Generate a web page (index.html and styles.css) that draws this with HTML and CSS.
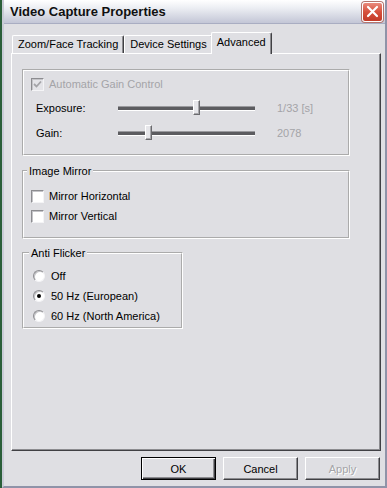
FILE: index.html
```html
<!DOCTYPE html>
<html>
<head>
  <title>Video Capture Properties</title>
  <link rel="stylesheet" href="styles.css">
</head>
<body>

  <div class="window">
    <div class="titlebar">
      <span class="title">Video Capture Properties</span>
      <span class="close">
        <svg width="13" height="13" viewBox="0 0 13 13"><path d="M2 2 L11 11 M11 2 L2 11" stroke="#fff" stroke-width="2.2" stroke-linecap="round"/></svg>
      </span>
    </div>

    <div class="client">
      <div class="tabs">
        <span class="tab">Zoom/Face Tracking</span>
        <span class="tab">Device Settings</span>
        <span class="tab active">Advanced</span>
      </div>

      <div class="panel">
        <div class="group gain">
          <div class="row check-row disabled">
            <span class="check checked"><svg width="9" height="9" viewBox="0 0 9 9"><path d="M1 4 L3.5 6.5 L8 1.5" fill="none" stroke="#a4a4a8" stroke-width="1.8"/></svg></span>
            <span>Automatic Gain Control</span>
          </div>
          <div class="slider-row">
            <span>Exposure:</span>
            <div class="slider"><span class="thumb" style="left: 75px"></span></div>
            <span class="value">1/33 [s]</span>
          </div>
          <div class="slider-row">
            <span>Gain:</span>
            <div class="slider"><span class="thumb" style="left: 27px"></span></div>
            <span class="value">2078</span>
          </div>
        </div>

        <fieldset class="group mirror">
          <legend>Image Mirror</legend>
          <div class="row"><span class="check"></span><span>Mirror Horizontal</span></div>
          <div class="row"><span class="check"></span><span>Mirror Vertical</span></div>
        </fieldset>

        <fieldset class="group flicker">
          <legend>Anti Flicker</legend>
          <div class="row"><span class="radio"></span><span>Off</span></div>
          <div class="row"><span class="radio selected"></span><span>50 Hz (European)</span></div>
          <div class="row"><span class="radio"></span><span>60 Hz (North America)</span></div>
        </fieldset>
      </div>

      <div class="buttons">
        <button type="button" class="btn default">OK</button>
        <button type="button" class="btn">Cancel</button>
        <button type="button" class="btn disabled">Apply</button>
      </div>
    </div>
  </div>

</body>
</html>
```

FILE: styles.css
```css
* {
  box-sizing: border-box;
}

body {
  margin: 0;
  background-color: #2a5e38;
  font: 11px "Liberation Sans", Arial, sans-serif;
  color: #000;
}

.window {
  margin-left: 2px;
  width: 385px;
  height: 488px;
  background-color: #dfdfe3;
  border-left: 2px solid #c9cbd6;
  border-right: 2px solid #8f93a8;
  border-bottom: 2px solid #8f93a8;
}

.titlebar {
  height: 24px;
  display: flex;
  align-items: center;
  justify-content: space-between;
  padding: 0 2px 0 6px;
  background: linear-gradient(to bottom, #ffffff 0%, #eceef3 35%, #c3c6d6 100%);
  border-bottom: 1px solid #a9adc2;
}

.title {
  font-weight: bold;
  font-size: 13px;
  color: #101010;
}

.close {
  width: 21px;
  height: 20px;
  display: flex;
  align-items: center;
  justify-content: center;
  border: 1px solid #fff;
  border-radius: 3px;
  background: linear-gradient(to bottom, #e98a7c 0%, #d6503c 50%, #c23a28 100%);
  box-shadow: 0 0 0 1px #b5746c;
}

.client {
  padding: 8px 0 0 7px;
}

.tabs {
  display: flex;
  align-items: flex-end;
  padding-left: 1px;
  height: 21px;
}

.tab {
  height: 18px;
  line-height: 16px;
  padding: 0 5px;
  border-top: 1px solid #fff;
  border-left: 1px solid #fff;
  border-right: 1px solid #404044;
  border-radius: 2px 2px 0 0;
  box-shadow: inset -1px 0 #8c8c90;
  white-space: nowrap;
}

.tab.active {
  position: relative;
  z-index: 1;
  height: 22px;
  margin: 0 -2px -1px -2px;
  padding-top: 1px;
  background-color: #dfdfe3;
}

.panel {
  width: 370px;
  height: 398px;
  padding: 15px 0 0 10px;
  border-top: 1px solid #fff;
  border-left: 1px solid #fff;
  border-right: 1px solid #404044;
  border-bottom: 1px solid #404044;
  box-shadow: inset -1px -1px #8c8c90;
}

.group {
  margin: 0;
  border: 2px groove #fff;
  min-width: 0;
}

.group.gain {
  width: 328px;
  padding: 6px 0 9px 7px;
}

.group.mirror {
  width: 328px;
  margin-top: 8px;
  padding: 8px 0 11px 7px;
}

.group.flicker {
  width: 161px;
  margin-top: 7px;
  padding: 6px 0 1px 9px;
}

legend {
  padding: 0 2px;
  margin-left: -4px;
  line-height: 14px;
}

.row {
  display: flex;
  align-items: center;
  gap: 5px;
  height: 20px;
}

.check-row {
  height: 14px;
  margin-bottom: 4px;
}

.disabled {
  color: #a4a4a8;
}

.check {
  width: 13px;
  height: 13px;
  display: flex;
  align-items: center;
  justify-content: center;
  background-color: #fff;
  border-top: 1px solid #8c8c90;
  border-left: 1px solid #8c8c90;
  border-right: 1px solid #f4f4f6;
  border-bottom: 1px solid #f4f4f6;
  box-shadow: inset 1px 1px #c4c4c8;
}

.check.checked {
  background-color: #e4e4e8;
}

.radio {
  position: relative;
  width: 12px;
  height: 12px;
  margin-right: 1px;
  border-radius: 50%;
  background-color: #fff;
  border: 1px solid;
  border-color: #8c8c90 #f4f4f6 #f4f4f6 #8c8c90;
  box-shadow: inset 1px 1px #c4c4c8;
}

.radio.selected::after {
  content: "";
  position: absolute;
  left: 3px;
  top: 3px;
  width: 4px;
  height: 4px;
  border-radius: 50%;
  background-color: #000;
}

.slider-row {
  display: grid;
  grid-template-columns: 82px 137px auto;
  align-items: center;
  height: 25px;
  padding-left: 5px;
}

.slider {
  position: relative;
  height: 16px;
}

.slider::before {
  content: "";
  position: absolute;
  left: 0;
  right: 0;
  top: 6px;
  height: 3px;
  background-color: #5c5c60;
  border-top: 1px solid #9a9a9e;
  border-bottom: 1px solid #fff;
}

.thumb {
  position: absolute;
  top: 0;
  width: 7px;
  height: 15px;
  background-color: #e6e6ea;
  border-top: 1px solid #fff;
  border-left: 1px solid #fff;
  border-right: 1px solid #6a6a6e;
  border-bottom: 1px solid #6a6a6e;
  box-shadow: inset -1px -1px #a8a8ac;
}

.value {
  margin-left: 22px;
  color: #a4a4a8;
}

.buttons {
  width: 370px;
  display: flex;
  justify-content: flex-end;
  gap: 7px;
  margin-top: 6px;
  padding-right: 1px;
}

.btn {
  width: 75px;
  height: 23px;
  padding: 0;
  font: 11px "Liberation Sans", Arial, sans-serif;
  color: #000;
  background-color: #dfdfe3;
  border-top: 1px solid #fff;
  border-left: 1px solid #fff;
  border-right: 1px solid #404044;
  border-bottom: 1px solid #404044;
  box-shadow: inset -1px -1px #8c8c90;
}

.btn.default {
  border: 1px solid #000;
  box-shadow: inset 1px 1px #fff, inset -1px -1px #404044, inset -2px -2px #8c8c90;
}

.btn.disabled {
  color: #a4a4a8;
  text-shadow: 1px 1px #fff;
}
```
